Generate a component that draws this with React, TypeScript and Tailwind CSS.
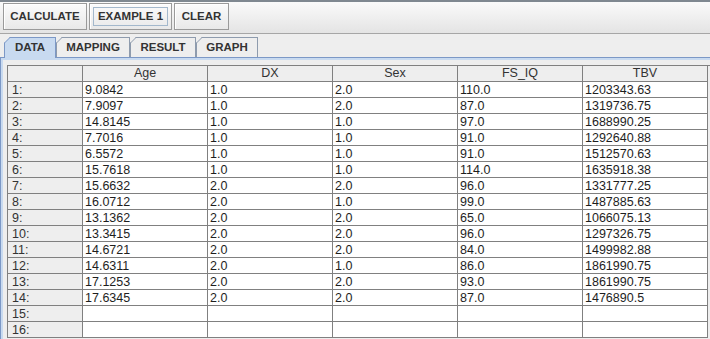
import React from "react";

const rows: string[][] = [
  ["9.0842", "1.0", "2.0", "110.0", "1203343.63"],
  ["7.9097", "1.0", "2.0", "87.0", "1319736.75"],
  ["14.8145", "1.0", "1.0", "97.0", "1688990.25"],
  ["7.7016", "1.0", "1.0", "91.0", "1292640.88"],
  ["6.5572", "1.0", "1.0", "91.0", "1512570.63"],
  ["15.7618", "1.0", "1.0", "114.0", "1635918.38"],
  ["15.6632", "2.0", "2.0", "96.0", "1331777.25"],
  ["16.0712", "2.0", "1.0", "99.0", "1487885.63"],
  ["13.1362", "2.0", "2.0", "65.0", "1066075.13"],
  ["13.3415", "2.0", "2.0", "96.0", "1297326.75"],
  ["14.6721", "2.0", "2.0", "84.0", "1499982.88"],
  ["14.6311", "2.0", "1.0", "86.0", "1861990.75"],
  ["17.1253", "2.0", "2.0", "93.0", "1861990.75"],
  ["17.6345", "2.0", "2.0", "87.0", "1476890.5"],
  ["", "", "", "", ""],
  ["", "", "", "", ""],
];

const columns = ["Age", "DX", "Sex", "FS_IQ", "TBV"];

const tabs = [
  { label: "DATA", width: "w-[52px]", active: true },
  { label: "MAPPING", width: "w-[74px]", active: false },
  { label: "RESULT", width: "w-[66px]", active: false },
  { label: "GRAPH", width: "w-[62px]", active: false },
];

const ToolButton = ({ label, width, focused }: { label: string; width: string; focused?: boolean }) => (
  <button
    className={`${width} h-[27px] flex items-center justify-center border border-[#9a9a9a] bg-gradient-to-b from-[#fbfbfb] to-[#e9e9e9] shadow-[inset_1px_1px_0_#ffffff] text-[11.5px] font-bold text-[#333333]`}
  >
    {focused ? (
      <span className="px-[4px] h-[19px] flex items-center border border-[#a3b8cc]">{label}</span>
    ) : (
      label
    )}
  </button>
);

const Tab = ({ label, width, active }: { label: string; width: string; active: boolean }) => (
  <div
    className={`relative ${width} h-[20px] flex items-center justify-center border-t border-l border-r text-[11.5px] font-bold text-[#333333] ${
      active ? "bg-[#c8daf0] border-[#7c98c6] h-[21px] -mb-px z-10" : "bg-[#eeeeee] border-[#8e9bad]"
    }`}
  >
    {/* angled top-left corner */}
    <svg className="absolute -left-px -top-px" width="7" height="7" viewBox="0 0 7 7">
      <polygon points="0,0 6,0 0,6" fill="#eeeeee" />
      <line x1="0" y1="6.5" x2="6.5" y2="0" stroke={active ? "#7c98c6" : "#8e9bad"} strokeWidth="1" />
    </svg>
    {label}
  </div>
);

export default function App() {
  return (
    <div
      className="w-[710px] h-[339px] overflow-hidden bg-[#eeeeee] flex flex-col"
      style={{ fontFamily: '"Liberation Sans", Arial, sans-serif' }}
    >
      {/* toolbar */}
      <div className="h-[34px] border-t-2 border-[#7f8890] border-b border-b-[#a6a6a6] bg-gradient-to-b from-[#fafafa] to-[#e4e4e4] flex items-start gap-[2px] pl-[3px] pt-px">
        <ToolButton label="CALCULATE" width="w-[84px]" />
        <ToolButton label="EXAMPLE 1" width="w-[83px]" focused />
        <ToolButton label="CLEAR" width="w-[55px]" />
      </div>

      {/* tabs */}
      <div className="flex items-end pl-[4px] pt-[2px] h-[23px]">
        {tabs.map((t) => (
          <Tab key={t.label} {...t} />
        ))}
      </div>

      {/* tab panel */}
      <div className="flex-1 border-t border-l border-[#7c98c6] shadow-[inset_2px_2px_0_#c8daf0] pt-[7px] pl-[6px]">
        <div className="border-t border-l border-[#808080] grid grid-cols-[75px_repeat(5,125px)] text-[12.5px] text-[#1e1e1e]">
          <div className="h-[16px] bg-[#eeeeee] border-r border-b border-[#808080]" />
          {columns.map((c) => (
            <div
              key={c}
              className="h-[16px] leading-[15px] bg-[#eeeeee] border-r border-b border-[#808080] text-center text-[#333333]"
            >
              {c}
            </div>
          ))}
          {rows.map((r, i) => (
            <React.Fragment key={i}>
              <div className="h-[16px] leading-[16px] bg-[#eeeeee] border-r border-b border-[#808080] pl-[4px] text-[#333333]">
                {i + 1}:
              </div>
              {r.map((v, j) => (
                <div key={j} className="h-[16px] leading-[16px] bg-white border-r border-b border-[#808080] pl-[2px]">
                  {v}
                </div>
              ))}
            </React.Fragment>
          ))}
        </div>
      </div>
    </div>
  );
}
